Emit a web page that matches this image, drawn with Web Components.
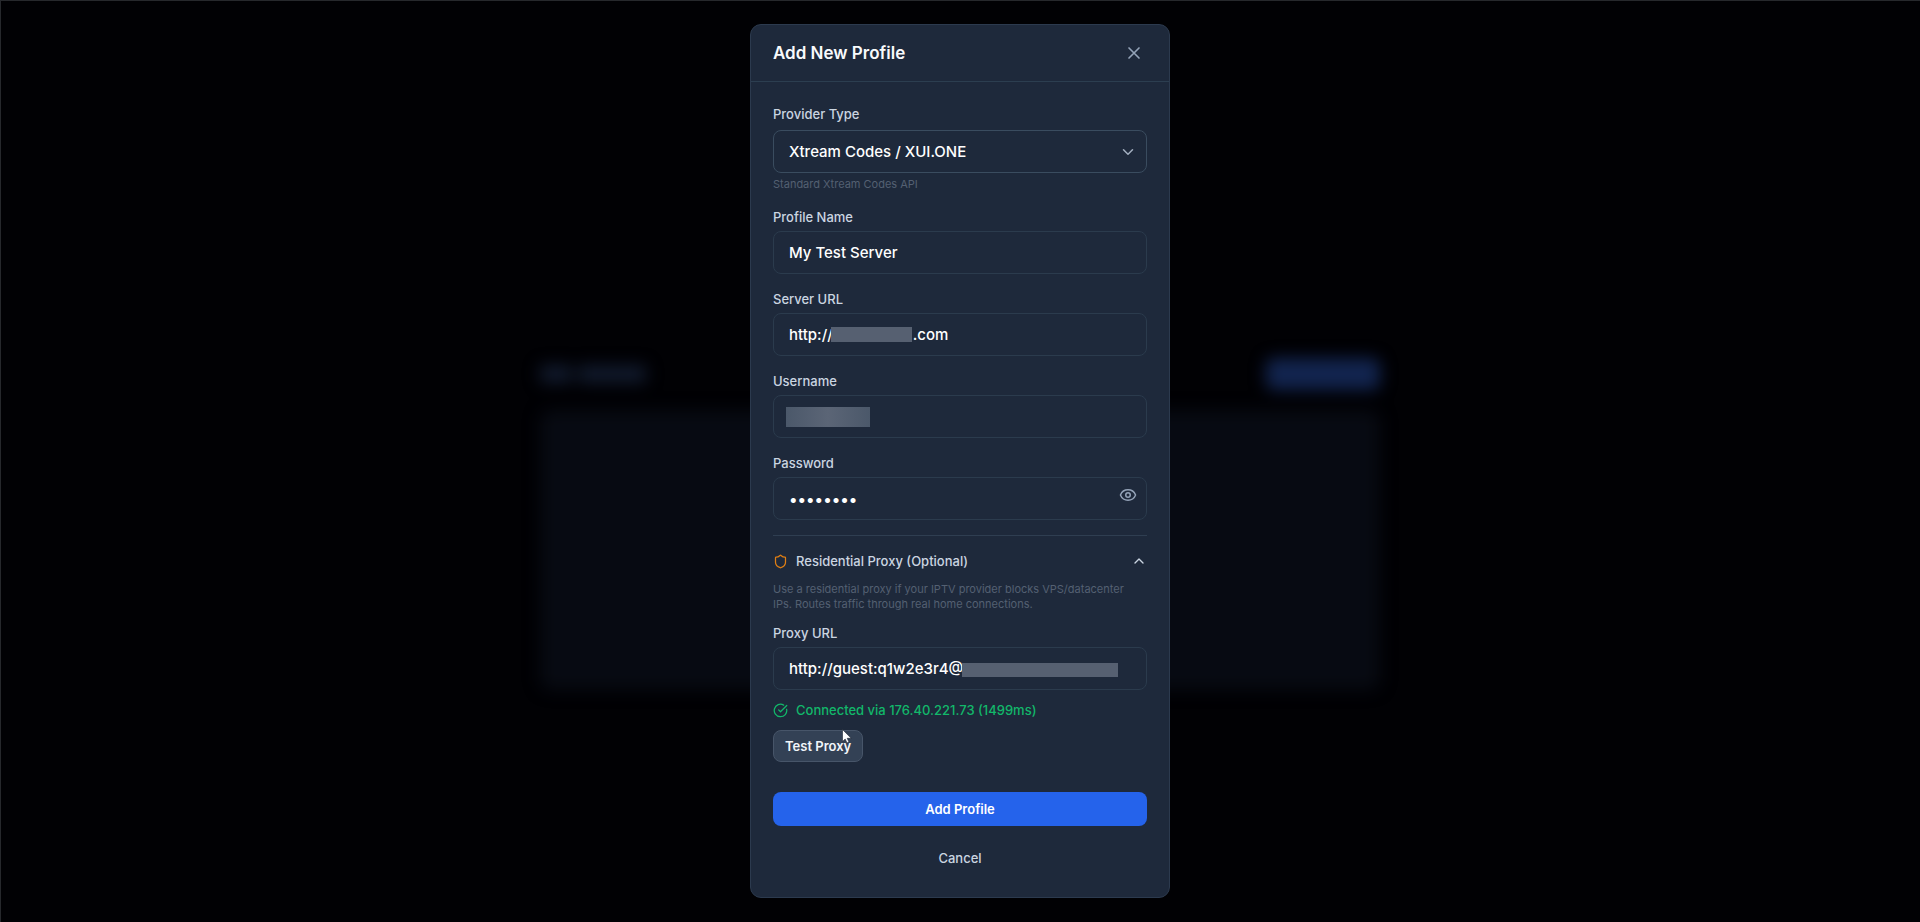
<!DOCTYPE html>
<html lang="en">
<head>
<meta charset="utf-8">
<title>Add New Profile</title>
<style>
  body {
    margin: 0;
    background: #010104;
    font-family: Inter, "Liberation Sans", sans-serif;
    font-size: 13px;
    line-height: 20px;
    color: #cbd5e1;
    --surface: #1e293b;
    --border: #2b3b4d;
    --muted: #546072;
    --redacted: #566071;
  }
</style>
</head>
<body>

<profile-page>
  <modal-dialog heading="Add New Profile">
    <select-field label="Provider Type" hint="Standard Xtream Codes API">
      <option>Xtream Codes / XUI.ONE</option>
    </select-field>
    <text-field label="Profile Name" value="My Test Server"></text-field>
    <text-field label="Server URL" value="http://" mask="server" suffix=".com"></text-field>
    <text-field label="Username" mask="user"></text-field>
    <text-field label="Password" type="password" value="password"></text-field>
    <proxy-section heading="Residential Proxy (Optional)">
      <span slot="help">Use a residential proxy if your IPTV provider blocks VPS/datacenter IPs. Routes traffic through real home connections.</span>
      <text-field label="Proxy URL" value="http://guest:q1w2e3r4@" mask="proxy"></text-field>
      <span slot="status">Connected via 176.40.221.73 (1499ms)</span>
      <app-button slot="action" variant="secondary">Test Proxy</app-button>
    </proxy-section>
    <app-button slot="actions" variant="primary">Add Profile</app-button>
    <app-button slot="actions" variant="ghost">Cancel</app-button>
  </modal-dialog>
</profile-page>

<template id="profile-page-template">
  <style>
    :host {
      display: grid;
      min-height: 100vh;
      box-shadow: inset 1px 1px #26282c;
    }

    .behind,
    .overlay {
      grid-area: 1 / 1;
    }

    /* The page under the dialog, dimmed and out of focus */
    .behind {
      display: flex;
      flex-direction: column;
      justify-content: center;
      gap: 20px;
      width: 100%;
      max-width: 840px;
      margin: 0 auto;
      filter: blur(8px);
    }

    .bar {
      display: flex;
      justify-content: space-between;
      align-items: center;
      padding-top: 126px;
    }

    .title {
      display: flex;
      gap: 6px;
    }

    .title i {
      height: 18px;
      border-radius: 4px;
      background: #111a2d;
    }

    .title i:first-child {
      width: 32px;
    }

    .title i:last-child {
      width: 68px;
    }

    .create {
      width: 114px;
      height: 32px;
      border-radius: 8px;
      background: #12244f;
    }

    .card {
      height: 280px;
      border-radius: 12px;
      background: #070a12;
    }

    .overlay {
      z-index: 1;
      display: flex;
      align-items: center;
      justify-content: center;
    }
  </style>
  <div class="behind" aria-hidden="true">
    <div class="bar">
      <div class="title"><i></i><i></i></div>
      <div class="create"></div>
    </div>
    <div class="card"></div>
  </div>
  <div class="overlay"><slot></slot></div>
</template>

<template id="modal-dialog-template">
  <style>
    :host {
      display: block;
      box-sizing: border-box;
      width: 100%;
      max-width: 420px;
      border: 1px solid #2c3a4e;
      border-radius: 11px;
      background: var(--surface);
    }

    header {
      display: flex;
      align-items: center;
      justify-content: space-between;
      padding: 18px 22px;
      border-bottom: 1px solid #2c3e50;
    }

    h2 {
      margin: 0;
      font-size: 17px;
      font-weight: 600;
      line-height: 20px;
      color: #f8fafc;
    }

    header button {
      display: flex;
      padding: 0 3px;
      border: 0;
      background: none;
      color: #94a3b8;
    }

    form {
      padding: 22px;
    }

    .fields {
      display: flex;
      flex-direction: column;
      gap: 15px;
    }

    .actions {
      display: flex;
      flex-direction: column;
      gap: 15px;
      margin-top: 30px;
    }
  </style>
  <header>
    <h2></h2>
    <button type="button" aria-label="Close"><ui-icon name="x" size="20"></ui-icon></button>
  </header>
  <form>
    <div class="fields"><slot></slot></div>
    <div class="actions"><slot name="actions"></slot></div>
  </form>
</template>

<template id="select-field-template">
  <style>
    :host {
      display: block;
    }

    label {
      display: block;
      margin-bottom: 6px;
      font-weight: 500;
    }

    .control {
      position: relative;
    }

    select {
      display: block;
      appearance: none;
      box-sizing: border-box;
      width: 100%;
      height: 43px;
      padding: 0 15px;
      border: 1px solid #3a4c5f;
      border-radius: 8px;
      background: var(--surface);
      color: #ffffff;
      font: 500 15px Inter, sans-serif;
    }

    ui-icon {
      position: absolute;
      top: 13px;
      right: 10px;
      color: #a3afbf;
      pointer-events: none;
    }

    p {
      margin: 4px 0 0;
      font-size: 11px;
      line-height: 15px;
      color: var(--muted);
    }
  </style>
  <label for="control"></label>
  <div class="control">
    <select id="control"></select>
    <ui-icon name="chevron-down" size="18"></ui-icon>
  </div>
  <p></p>
</template>

<template id="text-field-template">
  <style>
    :host {
      display: block;
    }

    label {
      display: block;
      margin-bottom: 4px;
      font-weight: 500;
    }

    .control {
      position: relative;
    }

    input {
      display: block;
      box-sizing: border-box;
      width: 100%;
      height: 43px;
      padding: 0 15px;
      border: 1px solid var(--border);
      border-radius: 8px;
      background: var(--surface);
      color: #ffffff;
      font: 500 15px Inter, sans-serif;
    }

    input[type="password"] {
      font-size: 16px;
    }

    .mask {
      position: absolute;
      background: var(--redacted);
    }

    .mask.server {
      left: 58px;
      top: 14px;
      width: 81px;
      height: 15px;
    }

    .mask.user {
      left: 13px;
      top: 12px;
      width: 84px;
      height: 20px;
      background: linear-gradient(90deg, #4b586a, #5b6576 50%, #4b586a);
    }

    .mask.proxy {
      left: 189px;
      top: 16px;
      width: 156px;
      height: 14px;
    }

    .reveal {
      position: absolute;
      top: 9px;
      right: 10px;
      display: flex;
      padding: 0;
      border: 0;
      background: none;
      color: #94a3b8;
    }
  </style>
  <label for="control"></label>
  <div class="control"><input id="control"></div>
</template>

<template id="proxy-section-template">
  <style>
    :host {
      display: block;
      padding-top: 15px;
      border-top: 1px solid #2f3e51;
    }

    .toggle {
      display: flex;
      align-items: center;
      gap: 8px;
      width: 100%;
      padding: 0;
      border: 0;
      background: none;
      color: inherit;
      font: inherit;
      font-weight: 500;
      text-align: left;
    }

    .toggle span {
      flex: 1;
    }

    .shield {
      color: #e07f14;
    }

    .help {
      margin: 11px 0;
      padding-right: 11px;
      font-size: 11px;
      line-height: 15px;
      color: var(--muted);
    }

    .status {
      display: flex;
      align-items: center;
      gap: 8px;
      margin: 10px 0;
      font-weight: 500;
      color: #12b76a;
    }

    .action {
      position: relative;
      width: fit-content;
    }

    .pointer {
      position: absolute;
      left: 69px;
      top: -1px;
    }
  </style>
  <button class="toggle" type="button" aria-expanded="true">
    <ui-icon class="shield" name="shield" size="15"></ui-icon>
    <span></span>
    <ui-icon name="chevron-up" size="16"></ui-icon>
  </button>
  <p class="help"><slot name="help"></slot></p>
  <slot></slot>
  <div class="status">
    <ui-icon name="circle-check" size="15"></ui-icon>
    <slot name="status"></slot>
  </div>
  <div class="action">
    <slot name="action"></slot>
    <svg class="pointer" width="10" height="15" viewBox="0 0 10 15">
      <path d="M.5.5v12l2.700-2.400 1.800 3.900 2-.9-1.800-3.800h4z" fill="#ffffff" stroke="#1b2430" stroke-width=".6"/>
    </svg>
  </div>
</template>

<template id="app-button-template">
  <style>
    :host {
      display: block;
    }

    button {
      display: block;
      width: 100%;
      height: 34px;
      padding: 0 12px;
      border: 0;
      border-radius: 8px;
      background: none;
      color: #cbd5e1;
      font: 500 13px/20px Inter, sans-serif;
    }

    :host([variant="primary"]) button {
      background: #2563eb;
      color: #ffffff;
      font-weight: 600;
    }

    :host([variant="secondary"]) button {
      height: 32px;
      padding: 0 11px;
      border: 1px solid #475569;
      background: #334155;
      color: #f1f5f9;
      font-weight: 600;
    }
  </style>
  <button type="button"><slot></slot></button>
</template>

<script>
  const ICONS = {
    "x": '<path d="M18 6 6 18M6 6l12 12"/>',
    "chevron-down": '<path d="m6 9 6 6 6-6"/>',
    "chevron-up": '<path d="m18 15-6-6-6 6"/>',
    "eye":
      '<path d="M2.062 12.348a1 1 0 0 1 0-.696 10.750 10.750 0 0 1 19.876 0 1 1 0 0 1 0 .696 10.750 10.750 0 0 1-19.876 0"/><circle cx="12" cy="12" r="3"/>',
    "shield":
      '<path d="M20 13c0 5-3.500 7.500-7.660 8.950a1 1 0 0 1-.67-.01C7.500 20.500 4 18 4 13V6a1 1 0 0 1 1-1c2 0 4.500-1.200 6.240-2.720a1.170 1.170 0 0 1 1.520 0C14.510 3.810 17 5 19 5a1 1 0 0 1 1 1z"/>',
    "circle-check":
      '<path d="M21.801 10A10 10 0 1 1 17 3.335"/><path d="m9 11 3 3L22 4"/>',
  };

  function attachTemplate(element, id) {
    const template = document.querySelector(id);
    element.attachShadow({ mode: "open" });
    element.shadowRoot.appendChild(template.content.cloneNode(true));
  }

  customElements.define(
    "ui-icon",
    class extends HTMLElement {
      connectedCallback() {
        const size = this.getAttribute("size");
        this.attachShadow({ mode: "open" });
        this.shadowRoot.innerHTML = `
          <style>
            :host { display: block; flex: none; }
            svg { display: block; }
          </style>
          <svg width="${size}" height="${size}" viewBox="0 0 24 24" fill="none"
            stroke="currentColor" stroke-width="2" stroke-linecap="round"
            stroke-linejoin="round">${ICONS[this.getAttribute("name")]}</svg>`;
      }
    }
  );

  customElements.define(
    "profile-page",
    class extends HTMLElement {
      connectedCallback() {
        attachTemplate(this, "#profile-page-template");
      }
    }
  );

  customElements.define(
    "modal-dialog",
    class extends HTMLElement {
      connectedCallback() {
        attachTemplate(this, "#modal-dialog-template");
        this.setAttribute("role", "dialog");
        this.shadowRoot.querySelector("h2").textContent =
          this.getAttribute("heading");
      }
    }
  );

  customElements.define(
    "select-field",
    class extends HTMLElement {
      connectedCallback() {
        attachTemplate(this, "#select-field-template");
        const root = this.shadowRoot;
        root.querySelector("label").textContent = this.getAttribute("label");
        root.querySelector("p").textContent = this.getAttribute("hint");
        // A select does not take slotted options, so move them in.
        root
          .querySelector("select")
          .append(...this.querySelectorAll("option"));
      }
    }
  );

  customElements.define(
    "text-field",
    class extends HTMLElement {
      connectedCallback() {
        attachTemplate(this, "#text-field-template");
        const root = this.shadowRoot;
        const control = root.querySelector(".control");
        const input = root.querySelector("input");
        root.querySelector("label").textContent = this.getAttribute("label");
        input.type = this.getAttribute("type") || "text";
        input.value = this.getAttribute("value") || "";

        if (this.hasAttribute("suffix")) {
          // Leave room for the masked host name.
          input.value += "\u00a0".repeat(20) + this.getAttribute("suffix");
        }
        if (this.hasAttribute("mask")) {
          const mask = document.createElement("span");
          mask.className = "mask " + this.getAttribute("mask");
          control.appendChild(mask);
        }
        if (input.type === "password") {
          const reveal = document.createElement("button");
          reveal.type = "button";
          reveal.className = "reveal";
          reveal.setAttribute("aria-label", "Show password");
          reveal.innerHTML = '<ui-icon name="eye" size="18"></ui-icon>';
          control.appendChild(reveal);
        }
      }
    }
  );

  customElements.define(
    "proxy-section",
    class extends HTMLElement {
      connectedCallback() {
        attachTemplate(this, "#proxy-section-template");
        this.shadowRoot.querySelector(".toggle span").textContent =
          this.getAttribute("heading");
      }
    }
  );

  customElements.define(
    "app-button",
    class extends HTMLElement {
      connectedCallback() {
        attachTemplate(this, "#app-button-template");
      }
    }
  );
</script>
</body>
</html>
